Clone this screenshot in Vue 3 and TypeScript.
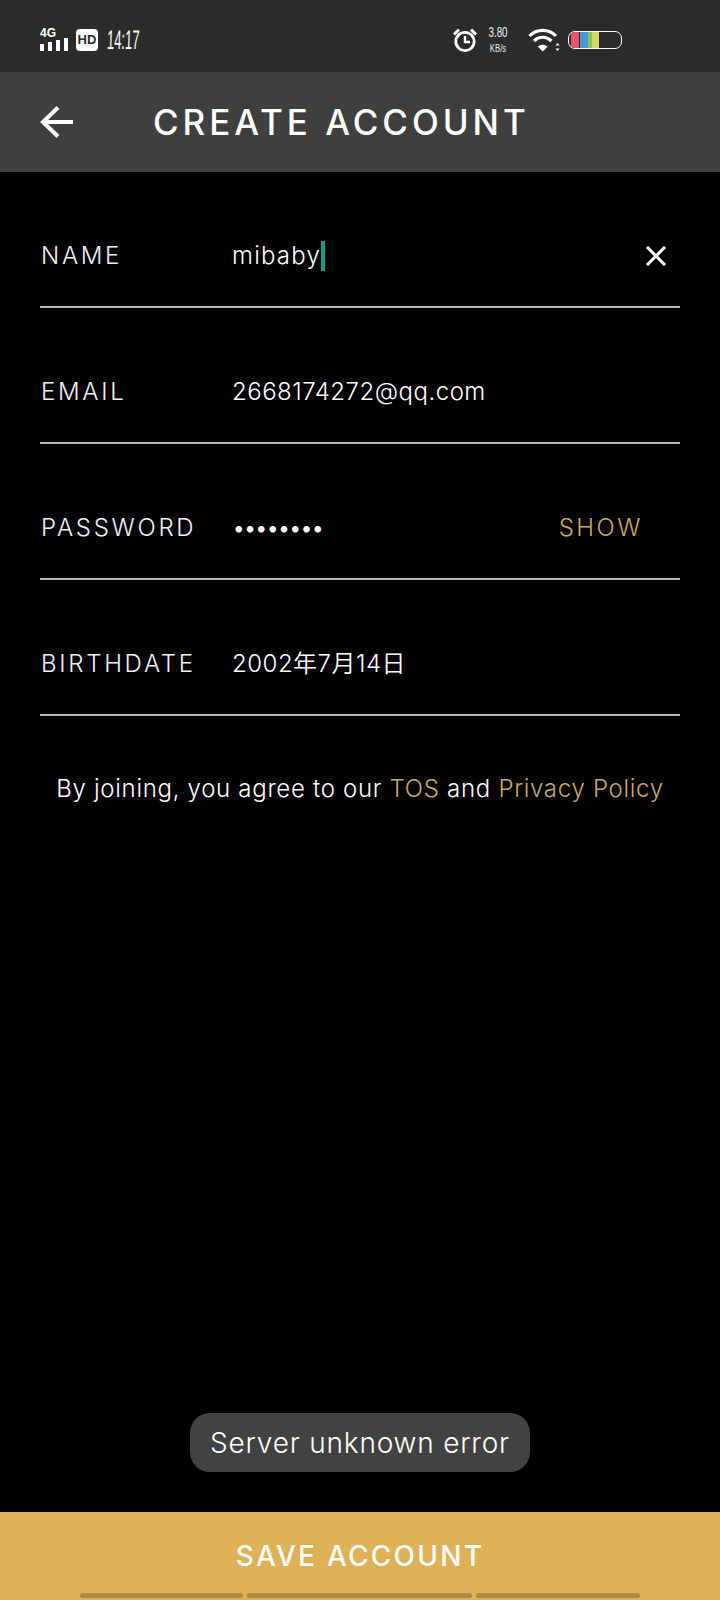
<template>
  <div class="screen">
    <div class="status-bar">
      <div class="status-left">
        <div class="signal">
          <span class="net">4G</span>
          <div class="bars">
            <i v-for="h in signalBars" :key="h" :style="{ height: h + 'px' }"></i>
          </div>
        </div>
        <span class="hd">HD</span>
        <span class="time">14:17</span>
      </div>
      <div class="status-right">
        <svg class="alarm" width="26" height="26" viewBox="0 0 26 26" fill="none" stroke="#fff">
          <circle cx="13" cy="14.500" r="9.200" stroke-width="2.800"/>
          <path d="M13 9v6h5" stroke-width="2.400"/>
          <path d="M2 7.500L7 2.500M24 7.500L19 2.500" stroke-width="3"/>
        </svg>
        <div class="speed"><span>3.80</span><span class="unit">KB/s</span></div>
        <svg class="wifi" width="32" height="24" viewBox="0 0 32 24" fill="none" stroke="#fff" stroke-width="3.200">
          <path d="M1.500 8C8.500 .5 21 .5 28 8"/>
          <path d="M6 13C11 8 18 8 23.500 13"/>
          <path d="M14.700 23.500l-5-5c3-2.500 7-2.500 10 0z" fill="#fff" stroke="none"/>
          <path d="M29.500 15l-2 2.600h4zM29.500 23l-2-2.600h4z" fill="#fff" stroke="none"/>
        </svg>
        <div class="battery">
          <i class="red"></i><i class="blue"></i><i class="green"></i><i class="yellow"></i>
        </div>
      </div>
    </div>

    <header class="top-bar">
      <svg class="back" width="34" height="34" viewBox="0 0 34 34" fill="none" stroke="#fff" stroke-width="4">
        <path d="M33 17H3M18 2.500L3 17l15 14.500"/>
      </svg>
      <h1>CREATE ACCOUNT</h1>
    </header>

    <main class="form">
      <div v-for="f in fields" :key="f.label" class="row">
        <span class="label">{{ f.label }}</span>
        <span class="value" :class="f.kind">{{ f.value }}<i v-if="f.cursor" class="cursor"></i></span>
        <svg v-if="f.clear" class="clear" width="20" height="20" viewBox="0 0 20 20" stroke="#fff" stroke-width="3">
          <path d="M1 1l18 18M19 1L1 19"/>
        </svg>
        <span v-if="f.action" class="show">{{ f.action }}</span>
      </div>
      <p class="terms">By joining, you agree to our <a>TOS</a> and <a>Privacy Policy</a></p>
    </main>

    <div class="toast">Server unknown error</div>

    <footer class="save">
      <span>SAVE ACCOUNT</span>
      <div class="gesture"><i></i><i></i><i></i></div>
    </footer>
  </div>
</template>

<script setup lang="ts">
interface Field {
  label: string;
  value: string;
  kind?: string;
  cursor?: boolean;
  clear?: boolean;
  action?: string;
}

const signalBars = [7, 9, 11, 13];

const fields: Field[] = [
  { label: 'NAME', value: 'mibaby', kind: 'name', cursor: true, clear: true },
  { label: 'EMAIL', value: '2668174272@qq.com' },
  { label: 'PASSWORD', value: '••••••••', kind: 'dots', action: 'SHOW' },
  { label: 'BIRTHDATE', value: '2002年7月14日' },
];
</script>

<style>
html, body { margin: 0; background: #000; }
</style>

<style scoped>
* { box-sizing: border-box; }
.screen {
  width: 720px;
  height: 1600px;
  background: #000;
  color: #fff;
  display: flex;
  flex-direction: column;
  font-family: Inter, "Noto Sans CJK SC", sans-serif;
}
.status-bar {
  height: 72px;
  flex-shrink: 0;
  background: #2b2b2b;
  display: flex;
  justify-content: space-between;
  align-items: center;
  padding: 7px 98px 0 40px;
  font-family: "Liberation Sans", sans-serif;
}
.status-left, .status-right { display: flex; align-items: center; }
.signal { width: 28px; margin-right: 8px; display: flex; flex-direction: column; }
.net { font-size: 12px; font-weight: 700; line-height: 9px; }
.bars { display: flex; align-items: flex-end; justify-content: space-between; height: 13px; }
.bars i { width: 4px; background: #fff; }
.hd {
  width: 22px;
  height: 22px;
  background: #fff;
  border-radius: 4px;
  color: #2b2b2b;
  font-size: 13px;
  font-weight: 700;
  line-height: 22px;
  text-align: center;
  margin-right: 9px;
}
.time {
  display: inline-block;
  width: 32px;
  font-size: 27px;
  line-height: 26px;
  white-space: nowrap;
  transform-origin: left center;
  transform: scaleX(0.48) skewX(-4deg);
}
.alarm { margin-right: 9px; margin-left: 1px; }
.speed {
  width: 22px;
  margin-right: 19px;
  display: flex;
  flex-direction: column;
  align-items: center;
  font-size: 14px;
  line-height: 15px;
  color: #eee;
  transform: scaleX(0.7);
  white-space: nowrap;
}
.speed .unit { font-size: 11px; line-height: 12px; margin-top: 2px; }
.wifi { margin-right: 8px; }
.battery {
  width: 54px;
  height: 18px;
  border: 1.500px solid #fff;
  border-radius: 7px;
  overflow: hidden;
  display: flex;
  padding-left: 2px;
}
.battery i { height: 100%; }
.battery .red { width: 8px; background: #e2566a; }
.battery .blue { width: 8px; margin-left: 1px; background: #4f97d8; }
.battery .green { width: 4px; background: #7fc85a; }
.battery .yellow { width: 7px; background: #d7d66e; }

.top-bar {
  height: 100px;
  flex-shrink: 0;
  background: #3f3f3f;
  display: flex;
  align-items: center;
  padding-left: 40px;
}
.back { margin-right: 79px; }
.top-bar h1 {
  margin: 0;
  font-size: 35px;
  font-weight: 500;
  letter-spacing: 3.950px;
}

.form { padding: 0 40px; }
.row {
  height: 136px;
  border-bottom: 2px solid #b4b4b4;
  display: flex;
  align-items: center;
  padding-top: 34px;
  font-size: 24px;
  line-height: 30px;
}
.label { width: 192px; padding-left: 1px; letter-spacing: 2.700px; font-weight: 350; color: #f2f2f2; }
.value { flex: 1; display: flex; align-items: center; font-weight: 350; letter-spacing: 0.500px; }
.value.name { letter-spacing: 1.200px; }
.value.dots { letter-spacing: -2.200px; }
.cursor { width: 4px; height: 30px; background: #13a08b; }
.clear { margin-right: 14px; }
.show { margin-right: 37px; color: #c9a961; letter-spacing: 2.500px; font-weight: 350; }
.terms {
  margin: 58px 0 0;
  text-align: center;
  font-size: 24px;
  font-weight: 350;
  letter-spacing: 0.700px;
  white-space: nowrap;
}
.terms a { color: #c9a961; }

.toast {
  margin: auto auto 40px;
  height: 59px;
  width: 340px;
  border-radius: 20px;
  background: #424242;
  font-size: 28px;
  font-weight: 350;
  letter-spacing: 0.800px;
  display: flex;
  align-items: center;
  justify-content: center;
}
.save {
  height: 88px;
  flex-shrink: 0;
  background: #dfb157;
  display: flex;
  flex-direction: column;
  align-items: center;
  font-size: 28px;
  font-weight: 500;
  letter-spacing: 2.250px;
  padding-top: 26px;
}
.save span { line-height: 36px; }
.gesture {
  margin-top: 19px;
  width: 560px;
  display: flex;
  gap: 4px;
}
.gesture i { height: 5px; border-radius: 3px; background: #ad8c46; }
.gesture i:nth-child(1) { width: 163px; }
.gesture i:nth-child(2) { width: 225px; }
.gesture i:nth-child(3) { width: 164px; }
</style>
